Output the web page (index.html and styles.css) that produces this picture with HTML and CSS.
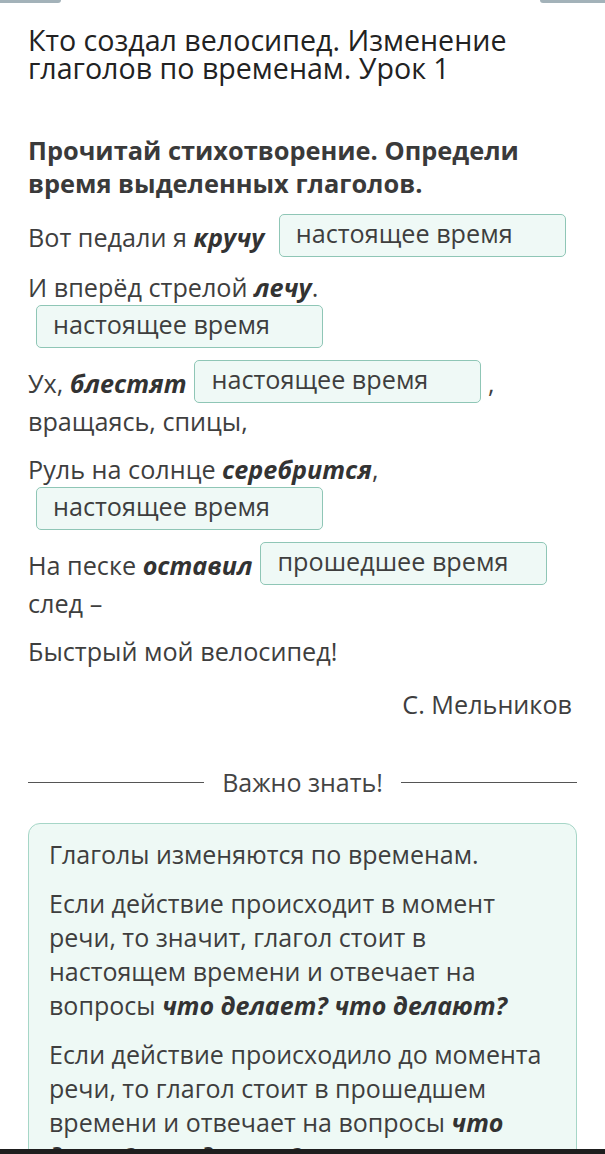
FILE: index.html
```html
<!DOCTYPE html>
<html lang="ru">
<head>
<meta charset="utf-8">
<title>Кто создал велосипед</title>
<link rel="stylesheet" href="styles.css">
</head>
<body>
<div class="topbar topbar-left"></div>
<div class="topbar topbar-right"></div>
<main class="page">
  <h1 class="title">Кто создал велосипед. Изменение глаголов по временам. Урок 1</h1>
  <h2 class="task">Прочитай стихотворение. Определи время выделенных глаголов.</h2>
  <div class="poem">
    <p class="line">Вот педали я <b>кручу</b> <span class="answer">настоящее время</span></p>
    <p class="line">И вперёд стрелой <b>лечу</b>. <span class="answer">настоящее время</span></p>
    <p class="line">Ух, <b>блестят</b><span class="answer">настоящее время</span> , вращаясь, спицы,</p>
    <p class="line">Руль на солнце <b>серебрится</b>, <span class="answer">настоящее время</span></p>
    <p class="line">На песке <b>оставил</b><span class="answer">прошедшее время</span> след&nbsp;–</p>
    <p class="line">Быстрый мой велосипед!</p>
    <p class="line author">С. Мельников</p>
  </div>
  <div class="divider"><span class="divider-text">Важно знать!</span></div>
  <section class="info">
    <p>Глаголы изменяются по временам.</p>
    <p>Если действие происходит в момент речи, то значит, глагол стоит в настоящем времени и отвечает на вопросы <b>что делает? что делают?</b></p>
    <p>Если действие происходило до момента речи, то глагол стоит в прошедшем времени и отвечает на вопросы <b>что делал? что делали?</b></p>
  </section>
</main>
<div class="navbar"></div>
</body>
</html>
```
FILE: styles.css
```css
html, body {
  margin: 0;
  padding: 0;
  background: #ffffff;
}
body {
  font-family: "Open Sans", "Noto Sans", sans-serif;
  color: #3e3e3e;
  overflow: hidden;
  height: 1154px;
}
.topbar {
  position: absolute;
  top: 0;
  height: 3px;
  background: #a3b2b9;
}
.topbar-left {
  left: 0;
  width: 61px;
  border-bottom-right-radius: 4px;
}
.topbar-right {
  right: 0;
  width: 65px;
  border-bottom-left-radius: 4px;
}
.navbar {
  position: fixed;
  left: 0;
  right: 0;
  bottom: 0;
  height: 5px;
  background: #1e1e1e;
}
.page {
  padding: 26px 28px 0 28px;
}
.title {
  margin: 0;
  font-size: 28.6px;
  font-weight: 400;
  line-height: 28px;
  color: #222;
}
.task {
  margin: 52px 0 0 0;
  font-size: 25.4px;
  font-weight: 700;
  line-height: 33px;
  color: #3a3a3a;
}
.poem {
  margin-top: 14px;
}
.line {
  margin: 0 0 12px 0;
  font-size: 25.2px;
  line-height: 36px;
}
.line b, .info b {
  font-weight: 700;
  font-style: italic;
  color: #333;
}
.answer {
  display: inline-block;
  box-sizing: border-box;
  width: 287px;
  height: 43px;
  margin-left: 8px;
  padding: 0 16px;
  line-height: 37px;
  border: 1px solid #8fc6b6;
  border-radius: 5px;
  background: #eff9f6;
  overflow: hidden;
  vertical-align: -10px;
  white-space: nowrap;
}
.author {
  text-align: right;
  margin-top: 17px;
  padding-right: 5px;
}
.divider {
  display: flex;
  align-items: center;
  gap: 18px;
  margin-top: 45px;
  font-size: 25px;
  line-height: 30px;
  color: #444;
}
.divider::before, .divider::after {
  content: "";
  flex: 1;
  height: 1px;
  background: #555;
}
.info {
  margin-top: 26px;
  padding: 13px 20px 20px 20px;
  border: 1px solid #a6d6c7;
  border-radius: 12px;
  background: #eef9f5;
}
.info p {
  margin: 0 0 15px 0;
  font-size: 25px;
  line-height: 34px;
}
```
